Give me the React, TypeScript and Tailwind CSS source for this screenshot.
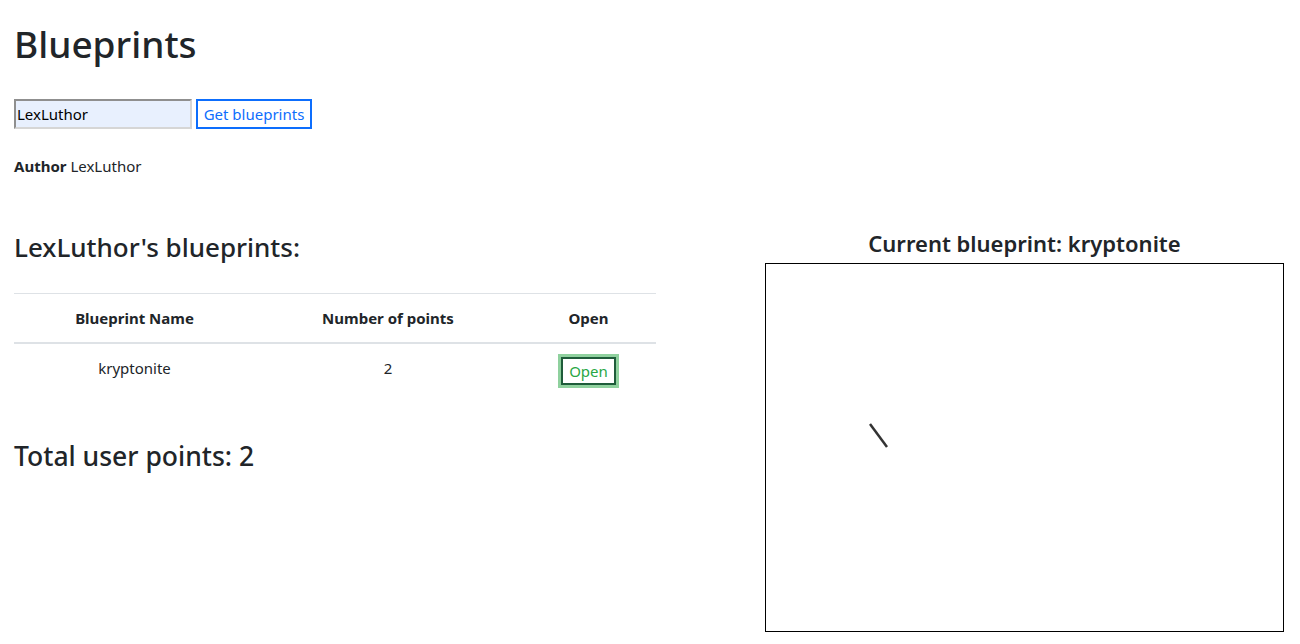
import React from "react";

export default function App() {
  const font = { fontFamily: '"Noto Sans", "Open Sans", sans-serif' };
  return (
    <div className="min-h-[644px] bg-white text-[#212529]" style={font}>
      <div className="px-[14px] pt-[20px]">
        <h1 className="text-[37px] leading-[48px] font-medium m-0">Blueprints</h1>
        <div className="mt-[31px] flex items-center gap-[4px]">
          <input
            defaultValue="LexLuthor"
            className="w-[178px] h-[30px] bg-[#e8f0fe] border-2 border-t-[#8f8f8f] border-l-[#8f8f8f] border-r-[#d6d6d6] border-b-[#d6d6d6] px-[1px] text-[15px] text-black outline-none"
          />
          <button className="h-[30px] w-[116px] border-2 border-[#0d6efd] text-[#0d6efd] text-[15px] bg-white">
            Get blueprints
          </button>
        </div>
        <p className="mt-[26px] text-[15px]">
          <span className="font-bold">Author</span> LexLuthor
        </p>
      </div>
      <div className="flex mt-[53px]">
        <div className="w-[656px] pl-[14px]">
          <h3 className="text-[26px] leading-[32px] font-medium">LexLuthor's blueprints:</h3>
          <table className="mt-[30px] w-[642px] text-[15px] text-center border-collapse">
            <thead>
              <tr className="border-t border-[#dee2e6] border-b-2 border-b-[#dee2e6]">
                <th className="w-[241px] h-[50px] font-bold">Blueprint Name</th>
                <th className="w-[266px] font-bold">Number of points</th>
                <th className="font-bold">Open</th>
              </tr>
            </thead>
            <tbody>
              <tr>
                <td className="h-[50px]">kryptonite</td>
                <td>2</td>
                <td>
                  <button className="text-[#28a745] text-[15px] bg-white border-2 border-[#1e5c3a] px-[6px] h-[28px] leading-[24px] shadow-[0_0_0_3px_#8fd19e] mt-[4px]">
                    Open
                  </button>
                </td>
              </tr>
            </tbody>
          </table>
          <h3 className="mt-[47px] text-[26.5px] leading-[32px] font-medium">Total user points: 2</h3>
        </div>
        <div className="flex-1 flex flex-col items-center pl-[105px] pr-[12px]">
          <h4 className="text-[22px] leading-[28px] font-semibold -mt-[2px] mb-[6px]">Current blueprint: kryptonite</h4>
          <div className="w-[519px] h-[369px] border border-black">
            <svg width="517" height="367">
              <line x1="104" y1="160" x2="121" y2="183" stroke="#333" strokeWidth="2.5" />
            </svg>
          </div>
        </div>
      </div>
    </div>
  );
}
